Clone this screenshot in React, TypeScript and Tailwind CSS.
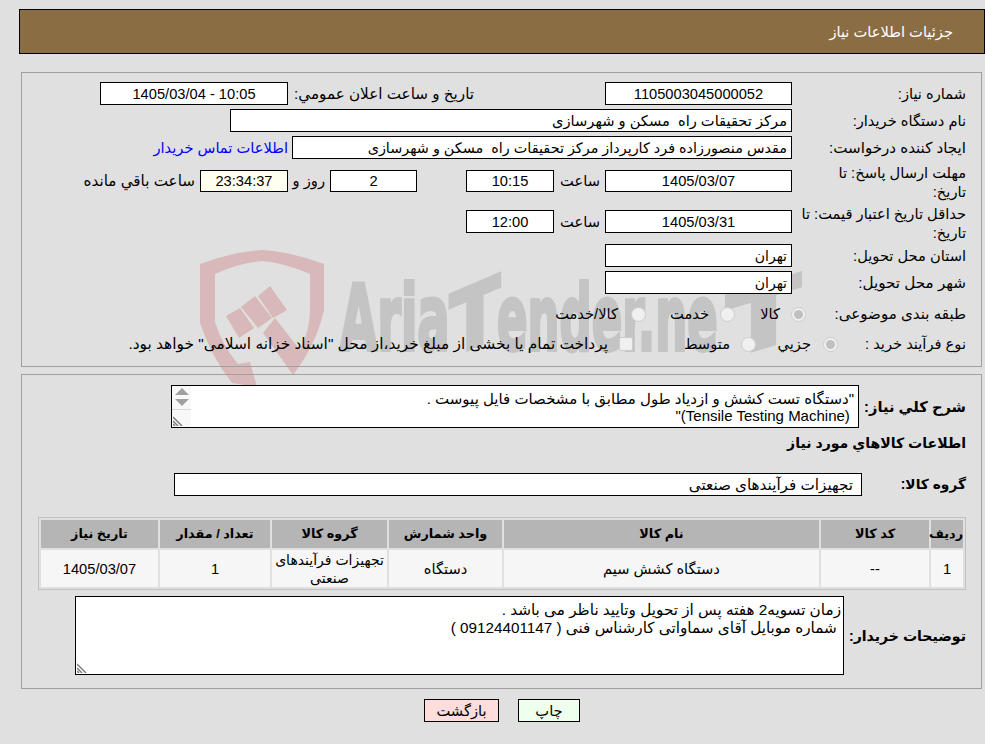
const Box = ({ className = '', bg = 'bg-white', children }: { className?: string; bg?: string; children?: React.ReactNode }) => (
    <div className={`flex items-center border border-black whitespace-pre ${bg} ${className}`}>{children}</div>
);

const Label = ({ className = '', children }: { className?: string; children: React.ReactNode }) => (
    <div className={`shrink-0 whitespace-nowrap ${className}`}>{children}</div>
);

const Radio = ({ checked = false }: { checked?: boolean }) => (
    <span className="flex h-[15px] w-[15px] shrink-0 items-center justify-center rounded-full border border-[#cccccc] bg-[#f0f0f0]">
        {checked && <span className="h-[9px] w-[9px] rounded-full bg-[#c0c0c0]" />}
    </span>
);

const Grip = () => (
    <svg width="11" height="11" viewBox="0 0 11 11" className="absolute bottom-[1px] left-[1px]">
        <path d="M0 2 L9 11 M0 6 L5 11 M0 9 L2 11" stroke="#777" strokeWidth="1.4" fill="none" />
    </svg>
);

const Watermark = () => (
    <svg width="985" height="744" viewBox="0 0 985 744" className="pointer-events-none absolute left-0 top-0 -z-10">
        <path
            d="M200 264 Q232 252 262 250 Q292 252 324 264 L324 310 Q316 345 293 375 L263 333 L275 318 L300 350 Q310 330 310 310 L310 274 Q285 263 262 261 Q238 263 215 274 L215 322 Q222 345 238 364 L250 362 L257 387 L232 383 Q212 358 200 323 Z"
            fill="#d8b8b8"
        />
        <path d="M226 316 L240 308 L254 328 L239 338 Z M241 307 L255 296 L272 318 L258 328 Z M258 296 L270 286 L287 310 L273 318 Z" fill="#d8b8b8" />
        <g direction="ltr" fontFamily="'DejaVu Sans'" fontWeight="700" fill="#c4c4c4" stroke="#c4c4c4" strokeWidth="4">
            <text transform="translate(340 350) scale(0.534 1)" fontSize="90">Aria</text>
            <text transform="translate(450 357) skewY(-23) scale(0.86 1)" fontSize="85">T</text>
            <text transform="translate(497 350) scale(0.5 1)" fontSize="90">ender.ne</text>
            <text transform="translate(727 358) skewY(-17) scale(1.26 1)" fontSize="85">T</text>
        </g>
    </svg>
);

const columns = [
    { title: 'ردیف', value: '1', width: 'w-[32px]', text: '' },
    { title: 'کد کالا', value: '--', width: 'w-[108px]', text: '' },
    { title: 'نام کالا', value: 'دستگاه کشش سیم', width: 'w-[315px]', text: '' },
    { title: 'واحد شمارش', value: 'دستگاه', width: 'w-[113px]', text: '' },
    { title: 'گروه کالا', value: 'تجهیزات فرآیندهای صنعتی', width: 'w-[115px]', text: 'text-[14px]' },
    { title: 'تعداد / مقدار', value: '1', width: 'w-[110px]', text: '' },
    { title: 'تاریخ نیاز', value: '1405/03/07', width: 'w-[117px]', text: '' },
];

export default function App() {
    return (
        <div
            dir="rtl"
            className="relative isolate h-[744px] w-[985px] overflow-hidden bg-[#e0e0e0] pl-[19px] pt-[9px] font-['Liberation_Sans','DejaVu_Sans',sans-serif] text-[14.67px] leading-[18px] text-black"
        >
            <Watermark />

            <div className="flex h-[45px] items-center border border-black bg-[#8b6d43] pr-[31px] text-white">جزئیات اطلاعات نیاز</div>

            {/* need info */}
            <div className="ml-[2px] mr-[3px] mt-[18px] h-[295px] border border-[#a0a0a0] pr-[15px] pt-[9px]">
                <div className="flex h-[23px] items-center">
                    <Label className="w-[174px]">شماره نیاز:</Label>
                    <Box className="h-[23px] w-[187px] justify-center">1105003045000052</Box>
                    <Label className="mr-[131px] w-[181px] text-[15.2px]">تاريخ و ساعت اعلان عمومي:</Label>
                    <Box className="mr-[5px] h-[23px] w-[188px] justify-center">10:05 - 1405/03/04</Box>
                </div>

                <div className="mt-[4px] flex h-[23px] items-center">
                    <Label className="w-[174px]">نام دستگاه خریدار:</Label>
                    <Box className="h-[23px] w-[562px] pr-[4px]">مرکز تحقیقات راه  مسکن و شهرسازی</Box>
                </div>

                <div className="mt-[4px] flex h-[23px] items-center">
                    <Label className="w-[174px] text-[15.1px]">ایجاد کننده درخواست:</Label>
                    <Box className="h-[23px] w-[500px] pr-[4px] text-[14.4px]">مقدس منصورزاده فرد کارپرداز مرکز تحقیقات راه  مسکن و شهرسازی</Box>
                    <a className="mr-[4px] whitespace-nowrap text-[#0000ff]">اطلاعات تماس خریدار</a>
                </div>

                <div className="mt-[11px] flex h-[22px] items-center">
                    <Label className="mt-[3px] w-[174px] leading-[19px]">مهلت ارسال پاسخ: تا<br />تاریخ:</Label>
                    <Box className="h-[22px] w-[187px] justify-center">1405/03/07</Box>
                    <Label className="mr-[5px] w-[42px]">ساعت</Label>
                    <Box className="mr-[4px] h-[22px] w-[88px] justify-center">10:15</Box>
                    <Box className="mr-[49px] h-[22px] w-[87px] justify-center">2</Box>
                    <Label className="mr-[5px] w-[28px]">روز و</Label>
                    <Box bg="bg-[#fffff0]" className="mr-[9px] h-[22px] w-[88px] justify-center">23:34:37</Box>
                    <Label className="mr-[5px] text-[15.2px]">ساعت باقي مانده</Label>
                </div>

                <div className="mt-[18px] flex h-[23px] items-center">
                    <Label className="mt-[5px] w-[174px] leading-[19px]">حداقل تاریخ اعتبار قیمت: تا<br />تاریخ:</Label>
                    <Box className="h-[23px] w-[187px] justify-center">1405/03/31</Box>
                    <Label className="mr-[5px] w-[42px]">ساعت</Label>
                    <Box className="mr-[4px] h-[23px] w-[88px] justify-center">12:00</Box>
                </div>

                <div className="mt-[11px] flex h-[23px] items-center">
                    <Label className="w-[174px]">استان محل تحویل:</Label>
                    <Box className="h-[23px] w-[187px] pr-[4px] text-[14px]">تهران</Box>
                </div>

                <div className="mt-[4px] flex h-[23px] items-center">
                    <Label className="w-[174px] text-[15.2px]">شهر محل تحویل:</Label>
                    <Box className="h-[23px] w-[187px] pr-[4px] text-[14px]">تهران</Box>
                </div>

                <div className="mt-[9px] flex h-[22px] items-center">
                    <Label className="w-[160px] text-[15.1px]">طبقه بندی موضوعی:</Label>
                    <Radio checked />
                    <Label className="mr-[11px] w-[20px]">کالا</Label>
                    <div className="mr-[25px]"><Radio /></div>
                    <Label className="mr-[11px] w-[40px]">خدمت</Label>
                    <div className="mr-[23px]"><Radio /></div>
                    <Label className="mr-[13px]">کالا/خدمت</Label>
                </div>

                <div className="mt-[8px] flex h-[22px] items-center">
                    <Label className="w-[128px]">نوع فرآیند خرید :</Label>
                    <Radio checked />
                    <Label className="mr-[12px] w-[35px]">جزيي</Label>
                    <div className="mr-[20px]"><Radio /></div>
                    <Label className="mr-[11px] w-[45px]">متوسط</Label>
                    <span className="mr-[52px] h-[14px] w-[14px] shrink-0 rounded-[2px] border border-[#cccccc] bg-[#f0f0f0]" />
                    <Label className="mr-[11px] text-[15.4px]">پرداخت تمام یا بخشی از مبلغ خرید،از محل "اسناد خزانه اسلامی" خواهد بود.</Label>
                </div>
            </div>

            {/* goods info */}
            <div className="ml-[2px] mr-[3px] mt-[7px] h-[315px] border border-[#a0a0a0] pr-[15px] pt-[10px]">
                <div className="flex h-[43px] items-center">
                    <Label className="w-[107px] font-bold">شرح کلي نياز:</Label>
                    <div className="relative h-[43px] w-[688px] whitespace-pre-wrap border border-black bg-white pr-[4px] pt-[4px] text-[15px] leading-[17px]">
                        {'"دستگاه تست کشش و ازدیاد طول مطابق با مشخصات فایل پیوست .\n (Tensile Testing Machine)"'}
                        <div className="absolute bottom-0 left-0 top-0 flex w-[19px] flex-col items-center bg-[#f8f8f8]">
                            <span className="mt-[2px] h-0 w-0 border-x-[7px] border-b-[7px] border-x-transparent border-b-[#a0a0a0]" />
                            <span className="mt-[4px] h-0 w-0 border-x-[7px] border-t-[7px] border-x-transparent border-t-[#a0a0a0]" />
                            <span className="mt-[3px] h-px w-full bg-[#d8d8d8]" />
                            <Grip />
                        </div>
                    </div>
                </div>

                <div className="mt-[6px] h-[18px] text-[14.1px] font-bold">اطلاعات کالاهاي مورد نياز</div>

                <div className="mt-[21px] flex h-[23px] items-center">
                    <Label className="w-[104px] text-[13.8px] font-bold">گروه کالا:</Label>
                    <Box className="h-[23px] w-[688px] pr-[8px] text-[15.2px]">تجهیزات فرآیندهای صنعتی</Box>
                </div>

                <table className="mt-[21px] h-[73px] w-[928px] table-fixed border-separate border-spacing-[2px] border border-[#c0c0c0] text-center">
                    <thead>
                        <tr className="h-[28px] bg-[#b5b5b5] text-[12.8px] font-bold">
                            {columns.map((col) => (
                                <th key={col.title} className={`p-0 font-bold ${col.width}`}>{col.title}</th>
                            ))}
                        </tr>
                    </thead>
                    <tbody>
                        <tr className="h-[37px] bg-[#f6f6f6]">
                            {columns.map((col) => (
                                <td key={col.title} className={`p-0 ${col.text}`}>{col.value}</td>
                            ))}
                        </tr>
                    </tbody>
                </table>

                <div className="mt-[6px] flex h-[79px] items-center">
                    <Label className="w-[122px] text-[14.1px] font-bold">توضیحات خریدار:</Label>
                    <div className="relative h-[79px] w-[769px] whitespace-pre-wrap border border-black bg-white pr-[2px] pt-[4px] text-[15.25px] leading-[17.5px]">
                        {'زمان تسویه2 هفته پس از تحویل وتایید ناظر می باشد .\n شماره موبایل آقای سماواتی کارشناس فنی ( 09124401147 )'}
                        <Grip />
                    </div>
                </div>
            </div>

            <div className="mt-[10px] flex justify-center gap-[19px]">
                <button className="h-[23px] w-[62px] border border-black bg-[#eeffee]">چاپ</button>
                <button className="h-[23px] w-[75px] border border-black bg-[#ffdddd]">بازگشت</button>
            </div>
        </div>
    );
}
